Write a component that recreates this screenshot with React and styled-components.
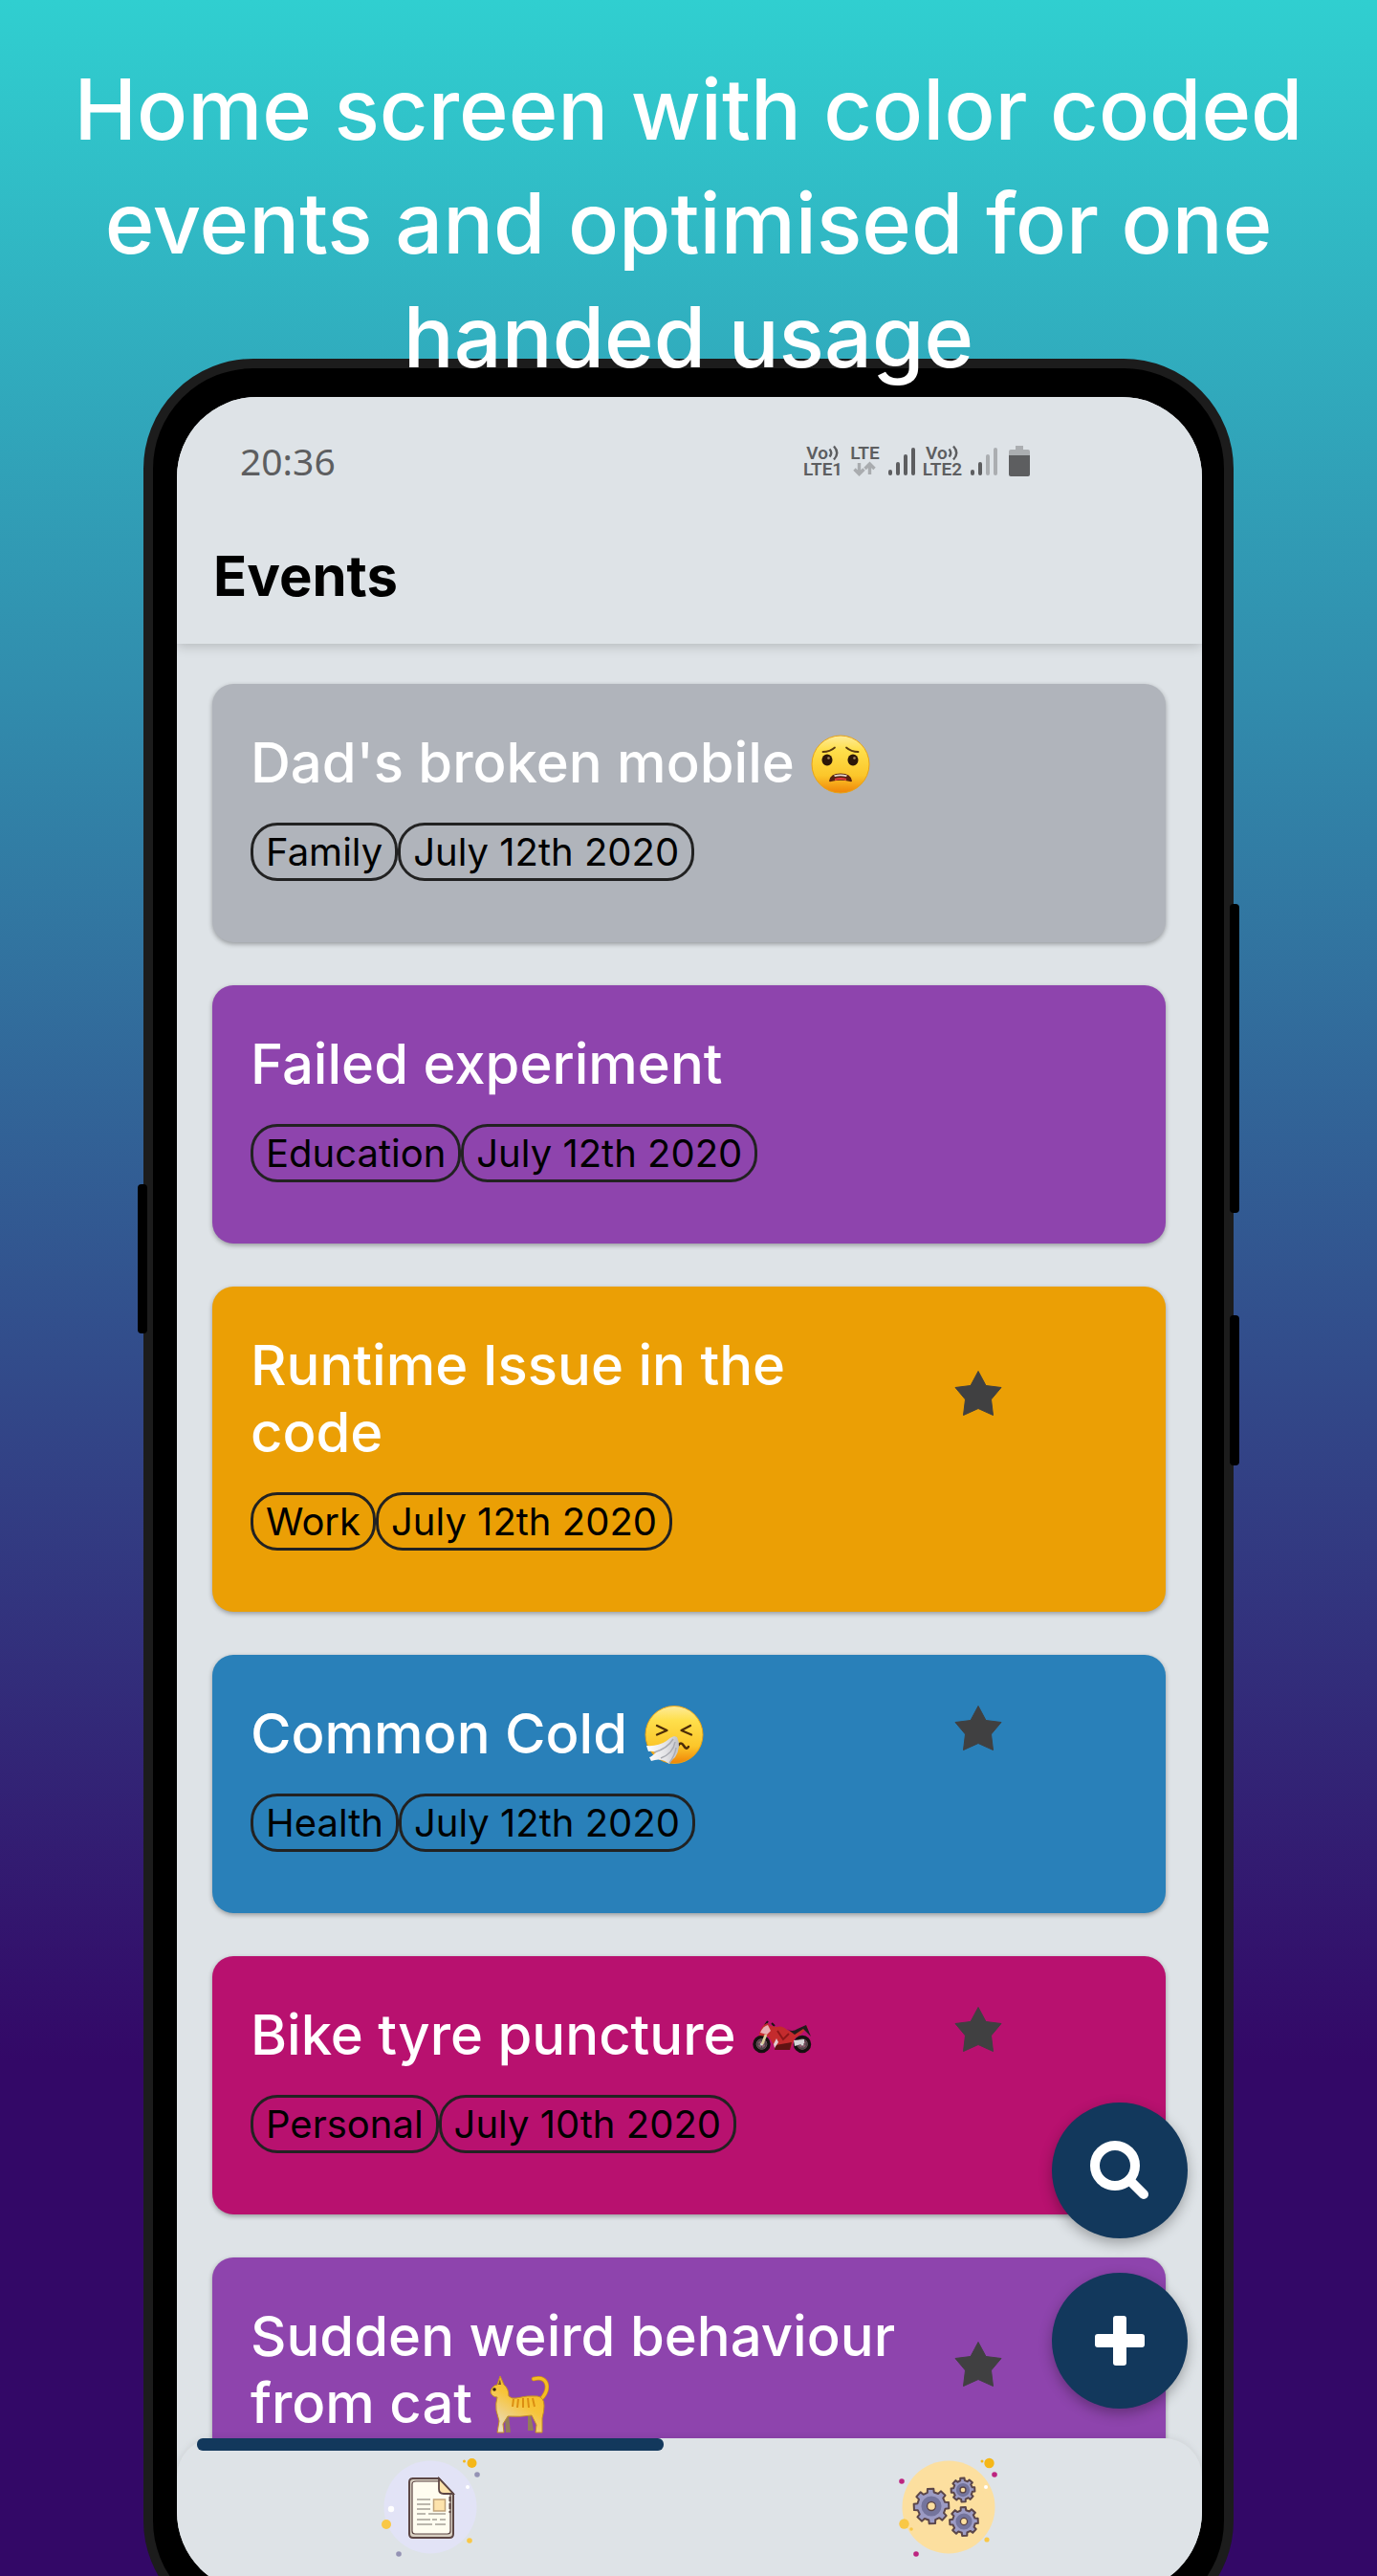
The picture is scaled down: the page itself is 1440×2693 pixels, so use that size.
import React from "react";
import styled, { createGlobalStyle } from "styled-components";

const GlobalStyle = createGlobalStyle`
  *, *::before, *::after { box-sizing: border-box; }
  body {
    margin: 0;
    font-family: Inter, "Liberation Sans", sans-serif;
  }
  h1, h2, h3, p, ul { margin: 0; padding: 0; }
  svg { display: block; flex: none; }
`;

const NAVY = "#12385c";
const SURFACE = "#dee3e7";

const Page = styled.div`
  height: 100vh;
  overflow: hidden;
  display: flex;
  flex-direction: column;
  background: linear-gradient(180deg, #30cfd0 0%, #330867 80%);
`;

const Headline = styled.h1`
  position: relative;
  z-index: 2;
  padding: 55px 40px 0;
  color: #fff;
  font-size: 88px;
  line-height: 119px;
  font-weight: 500;
  text-align: center;
`;

const Phone = styled.div`
  position: relative;
  flex: 1;
  min-height: 0;
  display: flex;
  margin: -37px 150px -57px;
  padding: 30px 23px 30px 25px;
  border: 10px solid #1c1c1c;
  border-radius: 115px;
  background: #000;
`;

const SideKey = styled.span`
  position: absolute;
  top: ${(p) => p.$top}px;
  ${(p) => p.$side}: -16px;
  width: 10px;
  height: ${(p) => p.$length}px;
  border-radius: 4px;
  background: #000;
`;

const Screen = styled.main`
  flex: 1;
  min-width: 0;
  display: flex;
  flex-direction: column;
  overflow: hidden;
  border-radius: 84px;
  background: ${SURFACE};
`;

const AppHeader = styled.header`
  position: relative;
  z-index: 1;
  background: ${SURFACE};
  box-shadow: 0 2px 12px rgba(0, 0, 0, 0.2);
`;

const StatusBar = styled.div`
  display: flex;
  justify-content: space-between;
  align-items: center;
  padding: 37px 180px 19px 66px;
  color: #5d5e60;
`;

const Clock = styled.time`
  font-family: "Noto Sans", sans-serif;
  font-size: 39px;
  line-height: 60px;
`;

const Indicators = styled.div`
  display: flex;
  align-items: center;
  gap: 8px;
`;

const Carrier = styled.div`
  display: flex;
  flex-direction: column;
  align-items: center;
  font-family: Roboto, sans-serif;
  font-size: 19px;
  line-height: 17px;
  font-weight: 600;
`;

const CarrierLine = styled.span`
  display: flex;
  align-items: center;
  height: 17px;
`;

const BatterySlot = styled.span`
  padding-left: 4px;
`;

const TitleBar = styled.div`
  display: flex;
  align-items: center;
  height: 142px;
  padding: 0 38px;
`;

const ScreenTitle = styled.h2`
  color: #000;
  font-size: 58px;
  line-height: 70px;
  font-weight: 700;
`;

const Body = styled.section`
  position: relative;
  flex: 1;
  min-height: 0;
  display: flex;
  flex-direction: column;
`;

const EventList = styled.ul`
  flex: 1;
  min-height: 0;
  overflow: hidden;
  display: flex;
  flex-direction: column;
  gap: 45px;
  padding: 42px 38px 0 37px;
  list-style: none;
`;

const Card = styled.li`
  flex: none;
  padding: 47px 40px 64px;
  border-radius: 22px;
  background: ${(p) => p.$color};
  box-shadow: 0 2px 5px rgba(0, 0, 0, 0.32);
`;

const CardTop = styled.div`
  display: grid;
  grid-template-columns: 3fr 1fr;
  align-items: center;
`;

const CardTitle = styled.h3`
  color: #fff;
  font-size: 58px;
  line-height: 70px;
  font-weight: 500;
`;

const InlineEmoji = styled.svg`
  display: inline-block;
  width: 62px;
  height: 62px;
  margin-left: 2px;
  vertical-align: -12px;
`;

const StarSlot = styled.span`
  padding: 0 0 10px 48px;
`;

const Tags = styled.div`
  display: flex;
  margin-top: 28px;
`;

const Tag = styled.span`
  padding: 0 13px;
  border: 3px solid #222;
  border-radius: 28px;
  color: #000;
  font-size: 40px;
  line-height: 55px;
`;

const Actions = styled.div`
  position: absolute;
  right: 15px;
  bottom: 31px;
  display: flex;
  flex-direction: column;
  gap: 36px;
`;

const RoundButton = styled.button`
  display: flex;
  align-items: center;
  justify-content: center;
  width: 142px;
  height: 142px;
  padding: 0;
  border: 0;
  border-radius: 50%;
  background: ${NAVY};
  box-shadow: 0 5px 14px rgba(0, 0, 0, 0.3);
`;

const TabBar = styled.nav`
  position: relative;
  display: grid;
  grid-template-columns: 1fr 1fr;
  gap: 54px;
  height: 161px;
  padding: 0 21px;
  border-radius: 40px 40px 0 0;
  background: ${SURFACE};
  box-shadow: 0 0 8px rgba(0, 0, 0, 0.09);
`;

const Tab = styled.button`
  display: flex;
  flex-direction: column;
  align-items: center;
  gap: 4px;
  padding: 0;
  border: 0;
  background: none;
`;

const TabMarker = styled.span`
  align-self: stretch;
  height: 13px;
  border-radius: 6px;
  background: ${(p) => (p.$active ? NAVY : "transparent")};
`;

/* ---------- status icons ---------- */

const Waves = () => (
  <svg width="12" height="17" viewBox="0 0 12 17" fill="none" stroke="#5d5e60" strokeWidth="2.4">
    <path d="M1.5 4.5Q5 8.5 1.5 12.5M6 1.5Q12.5 8.5 6 15.5" />
  </svg>
);

const Bars = ({ level }) => (
  <svg width="29" height="32" viewBox="0 0 29 32" strokeWidth="4" strokeLinecap="round">
    {[26, 18, 10, 3].map((y, i) => (
      <path key={y} d={`M${3 + i * 8} ${y + 1}V29`} stroke={i < level ? "#5d5e60" : "#abaeb1"} />
    ))}
  </svg>
);

const DataArrows = () => (
  <svg width="24" height="17" viewBox="0 0 24 17" fill="none" stroke="#a9acaf" strokeWidth="3.4">
    <path d="M6.500 2V14M1.500 8.500L6.500 13.500L11.500 8.500M17.500 14V3M12.500 8L17.500 3L22.500 8" />
  </svg>
);

const Battery = () => (
  <svg width="22" height="32" viewBox="0 0 22 32">
    <path d="M7 0H15V4H20Q22 4 22 6V11H0V6Q0 4 2 4H7Z" fill="#abaeb1" />
    <path d="M0 10H22V30Q22 32 20 32H2Q0 32 0 30Z" fill="#5d5e60" />
  </svg>
);

/* ---------- card icons ---------- */

const Star = () => (
  <svg width="50" height="50" viewBox="0 0 50 50" role="img" aria-label="Starred">
    <path
      d="M25 1.500L33 16.500L49 18.500L38.500 31L40.500 47.500L25 40.500L9.500 47.500L11.500 31L1 18.500L17 16.500Z"
      fill="#404041"
      stroke="#404041"
      strokeLinejoin="round"
    />
  </svg>
);

const FaceGradient = ({ id }) => (
  <defs>
    <linearGradient id={id} x1="0" y1="0" x2="0" y2="1">
      <stop offset="0" stopColor="#fdeb9a" />
      <stop offset="0.25" stopColor="#ffdf4b" />
      <stop offset="0.7" stopColor="#fbc62a" />
      <stop offset="1" stopColor="#f08407" />
    </linearGradient>
  </defs>
);

const WorriedFace = () => (
  <InlineEmoji viewBox="0 0 62 62" role="img" aria-label="worried face">
    <FaceGradient id="worried" />
    <circle cx="31" cy="31" r="30" fill="url(#worried)" stroke="#e8a317" />
    <path d="M12.500 18Q20 18 25 13.500M49.500 18Q42 18 37 13.500" fill="none" stroke="#5a3a10" strokeWidth="1.800" strokeLinecap="round" />
    <ellipse cx="17" cy="26.500" rx="5.500" ry="6" fill="#2c1608" />
    <ellipse cx="44" cy="26.500" rx="5.500" ry="6" fill="#2c1608" />
    <circle cx="18.500" cy="24.500" r="1.300" fill="#a98a60" />
    <circle cx="45.500" cy="24.500" r="1.300" fill="#a98a60" />
    <path d="M19 48.500Q20 40.500 31 40.500Q42 40.500 43 48.500Q42.500 49.500 41 49Q31 46.500 21 49Q19.500 49.500 19 48.500Z" fill="#57220f" />
    <path d="M24 42.500Q31 40.500 38 42.500L37 44Q31 42.500 25 44Z" fill="#e8dccf" />
    <path d="M25 47Q31 45 37 47" fill="none" stroke="#e23a3a" strokeWidth="2" />
  </InlineEmoji>
);

const SneezingFace = () => (
  <InlineEmoji viewBox="0 0 62 62" role="img" aria-label="sneezing face">
    <FaceGradient id="sneezing" />
    <linearGradient id="tissue" x1="0" y1="0" x2="1" y2="0">
      <stop offset="0" stopColor="#ffffff" />
      <stop offset="0.6" stopColor="#e3e3e6" />
      <stop offset="1" stopColor="#bfc0c6" />
    </linearGradient>
    <circle cx="31" cy="30.500" r="30" fill="url(#sneezing)" stroke="#e8a317" />
    <path d="M13 21L23.500 26L13 30.500M48 21L38.500 26L49 30.500" fill="none" stroke="#4d2c08" strokeWidth="2.300" strokeLinecap="round" strokeLinejoin="round" />
    <path d="M35 42Q38 37 41 42T46 43" fill="none" stroke="#4d2c08" strokeWidth="2.500" strokeLinecap="round" />
    <path d="M31 32Q27 33 23 37Q14 43 2 42L4 48Q8 47 12 49Q7 54 5 54L7 58Q15 55 21 58L26 61Q28 57 32 54Q39 43 34 33Z" fill="url(#tissue)" />
    <path d="M30 35Q24 45 10 49M32 38Q30 50 17 55M33 44Q32 52 26 60" fill="none" stroke="#a9abb2" strokeWidth="1.500" />
  </InlineEmoji>
);

const Wheel = ({ x }) => (
  <g>
    <circle cx={x} cy="39" r="7.500" fill="#8d5a6c" stroke="#15110f" strokeWidth="3.500" />
    <circle cx={x} cy="39" r="4.500" fill="none" stroke="#4c4448" strokeWidth="1.500" />
    <path d={`M${x - 6} 39H${x + 6}M${x} 33V45`} stroke="#4c4448" />
    <circle cx={x} cy="39" r="1.500" fill="#ddd" />
  </g>
);

const Motorcycle = () => (
  <InlineEmoji viewBox="0 0 62 62" role="img" aria-label="motorcycle">
    <Wheel x={9.5} />
    <Wheel x={52} />
    <path d="M13 19L16 15M20 17L23 20" stroke="#1b1513" strokeWidth="2" />
    <path d="M7 28Q9 20 15 17L19 20L25 21Q31 19 36 24L42 27L56 20L58 21L51 28L44 33L40 43H24L21 38L17 31L7 30Z" fill="#c42b2d" />
    <path d="M8 27Q11 20 16 19L19 25L15 29Z" fill="#eaaeb4" />
    <path d="M36 23Q41 27 47 23L56 19L61 31L53 23L44 29Z" fill="#231b1c" />
    <path d="M24 40L41 37L39 45H23Z" fill="#611313" />
    <path d="M14 29L10 39" stroke="#dccf9c" strokeWidth="2.800" />
    <path d="M43 35L54 34V38L44 41Z" fill="#d6d5d7" />
    <path d="M22 39L25 33L27 37L23 43Z" fill="#e3cdd1" />
    <path d="M26 25L32 34L38 28" fill="none" stroke="#8c1719" strokeWidth="2" />
  </InlineEmoji>
);

const Cat = () => (
  <InlineEmoji viewBox="0 0 62 62" role="img" aria-label="cat">
    <defs>
      <linearGradient id="fur" x1="0.900" y1="0" x2="0.300" y2="1">
        <stop offset="0" stopColor="#f6b91a" />
        <stop offset="0.5" stopColor="#f7c43a" />
        <stop offset="1" stopColor="#e9dcc0" />
      </linearGradient>
    </defs>
    <path d="M46 4Q59 1 60 12Q60 19 53 26" fill="none" stroke="#cf9016" strokeWidth="4.500" strokeLinecap="round" />
    <path d="M46 4Q59 1 60 12Q60 19 53 26" fill="none" stroke="#f6bd24" strokeWidth="3" strokeLinecap="round" />
    <path d="M20 42L22 60H17L16 44ZM43 41L46 58H40V42Z" fill="#937c59" />
    <path
      d="M8 10L11 1L15 10Q20 14 20 22Q23 25 28 24Q40 21 50 22Q57 23 57 32Q57 38 55 45L55 60H48L49 52L44 42Q32 44 19 43L14 51L15 60H8L10 48L7 37Q6 30 8 23Q3 23 1 18Q2 11 8 10Z"
      fill="url(#fur)"
      stroke="#c58e25"
    />
    <path d="M25 25L24 33M30 25L29 34M35 24V34M40 24L41 34M45 24L47 33" stroke="#dc8e12" strokeWidth="2" />
    <circle cx="5" cy="15" r="1.800" fill="#35240d" />
    <path d="M9 10L11 4L12 10Z" fill="#74502a" />
  </InlineEmoji>
);

/* ---------- action icons ---------- */

const SearchIcon = () => (
  <svg width="62" height="62" viewBox="0 0 62 62" fill="none" stroke="#fff">
    <circle cx="26" cy="26" r="21" strokeWidth="10" />
    <path d="M41 41L56 56" strokeWidth="10" strokeLinecap="round" />
  </svg>
);

const PlusIcon = () => (
  <svg width="52" height="52" viewBox="0 0 52 52" fill="#fff">
    <rect x="19" width="14" height="52" rx="3" />
    <rect y="19" width="52" height="14" rx="3" />
  </svg>
);

/* ---------- tab icons ---------- */

const Dots = ({ items }) =>
  items.map(([x, y, r, color]) => <circle key={`${x}-${y}`} cx={x} cy={y} r={r} fill={color} />);

const DocumentIcon = () => (
  <svg width="110" height="110" viewBox="0 0 110 110">
    <circle cx="55" cy="55" r="48.500" fill="#e2e3f6" />
    <Dots
      items={[
        [98.5, 9, 5, "#f5b718"],
        [90.5, 7, 1.5, "#f5b718"],
        [104, 21, 2.8, "#9492b4"],
        [94, 34, 2, "#fff"],
        [14, 57, 3.2, "#fff"],
        [9, 73, 5, "#f9c846"],
        [96, 90, 2.8, "#f9c846"],
        [22, 104, 2.8, "#9492b4"],
      ]}
    />
    <path d="M36 25H64L79 41V83Q79 87 75 87H37Q33 87 33 83V29Q33 25 37 25Z" fill="#d8d0c2" stroke="#5c4644" strokeWidth="2" />
    <path d="M40 28H64L76 41V80Q76 83 73 83H39Q36 83 36 80V31Q36 28 40 28Z" fill="#fffdf0" stroke="#5c4644" strokeWidth="1.200" />
    <path d="M64 25V36Q64 41 69 41H79Z" fill="#fde3ac" stroke="#5c4644" strokeWidth="1.800" />
    <path d="M41 47H55M41 52H55M41 57H55M41 62H50M53 62H71M41 68H55M57 68H62M65 68H71M41 73H57M60 73H71" stroke="#a5a096" strokeWidth="1.500" />
    <rect x="58.500" y="47" width="12" height="12" fill="#fde3ac" stroke="#c0a37a" strokeWidth="1.500" />
    <path d="M75.500 44V49M75.500 51V57M75.500 59V61" stroke="#5c4644" strokeWidth="2" />
  </svg>
);

const gearOutline = (cx, cy, r) => {
  const teeth = 8;
  const points = [];
  for (let i = 0; i < teeth; i += 1) {
    [
      [-0.3, 0.8],
      [-0.22, 1],
      [0.22, 1],
      [0.3, 0.8],
    ].forEach(([offset, k]) => {
      const a = ((i + offset) / teeth) * Math.PI * 2 - Math.PI / 2 - 0.05;
      points.push(`${(cx + Math.cos(a) * r * k).toFixed(2)},${(cy + Math.sin(a) * r * k).toFixed(2)}`);
    });
  }
  return points.join(" ");
};

const Gear = ({ cx, cy, r }) => (
  <g>
    <polygon points={gearOutline(cx, cy, r)} fill="#9c9bc4" stroke="#5b4649" strokeWidth="2" strokeLinejoin="round" />
    <circle cx={cx} cy={cy} r={r * 0.42} fill="none" stroke="#74749c" strokeWidth={r * 0.3} />
    <circle cx={cx} cy={cy} r={r * 0.24} fill="#fcdf9f" stroke="#5b4649" strokeWidth="1.400" />
  </g>
);

const GearsIcon = () => (
  <svg width="110" height="110" viewBox="0 0 110 110">
    <circle cx="55" cy="55" r="48.500" fill="#fcdf9f" />
    <Dots
      items={[
        [97.5, 9, 5.2, "#f5b718"],
        [90, 7, 1.5, "#f5b718"],
        [103, 21, 2.8, "#bd2480"],
        [6, 28, 2.8, "#bd2480"],
        [94, 34, 2, "#fff"],
        [8.5, 72.5, 5.2, "#f9c846"],
        [16, 78, 1.8, "#f9c846"],
        [95, 89, 2.6, "#f9c846"],
        [21, 104, 2.8, "#bd2480"],
      ]}
    />
    <Gear cx={37} cy={54} r={18.5} />
    <Gear cx={70} cy={37} r={12.5} />
    <Gear cx={71} cy={70} r={15} />
  </svg>
);

/* ---------- data ---------- */

const EVENTS = [
  { title: "Dad's broken mobile", Emoji: WorriedFace, tags: ["Family", "July 12th 2020"], color: "#b0b4bb" },
  { title: "Failed experiment", tags: ["Education", "July 12th 2020"], color: "#8e44ad" },
  { title: "Runtime Issue in the code", tags: ["Work", "July 12th 2020"], color: "#eb9f05", starred: true },
  { title: "Common Cold", Emoji: SneezingFace, tags: ["Health", "July 12th 2020"], color: "#2980b9", starred: true },
  { title: "Bike tyre puncture", Emoji: Motorcycle, tags: ["Personal", "July 10th 2020"], color: "#b8116f", starred: true },
  { title: "Sudden weird behaviour from cat", Emoji: Cat, tags: [], color: "#8e44ad", starred: true },
];

const EventCard = ({ title, Emoji, tags, color, starred }) => (
  <Card $color={color}>
    <CardTop>
      <CardTitle>
        {title}
        {Emoji && <> <Emoji /></>}
      </CardTitle>
      {starred && (
        <StarSlot>
          <Star />
        </StarSlot>
      )}
    </CardTop>
    {tags.length > 0 && (
      <Tags>
        {tags.map((tag) => (
          <Tag key={tag}>{tag}</Tag>
        ))}
      </Tags>
    )}
  </Card>
);

export default function App() {
  return (
    <Page>
      <GlobalStyle />
      <Headline>Home screen with color coded events and optimised for one handed usage</Headline>
      <Phone>
        <SideKey $side="left" $top={853} $length={156} />
        <SideKey $side="right" $top={560} $length={323} />
        <SideKey $side="right" $top={990} $length={157} />
        <Screen>
          <AppHeader>
            <StatusBar>
              <Clock>20:36</Clock>
              <Indicators>
                <Carrier>
                  <CarrierLine>Vo<Waves /></CarrierLine>
                  <CarrierLine>LTE1</CarrierLine>
                </Carrier>
                <Carrier>
                  <CarrierLine>LTE</CarrierLine>
                  <DataArrows />
                </Carrier>
                <Bars level={4} />
                <Carrier>
                  <CarrierLine>Vo<Waves /></CarrierLine>
                  <CarrierLine>LTE2</CarrierLine>
                </Carrier>
                <Bars level={2} />
                <BatterySlot>
                  <Battery />
                </BatterySlot>
              </Indicators>
            </StatusBar>
            <TitleBar>
              <ScreenTitle>Events</ScreenTitle>
            </TitleBar>
          </AppHeader>
          <Body>
            <EventList>
              {EVENTS.map((event) => (
                <EventCard key={event.title} {...event} />
              ))}
            </EventList>
            <Actions>
              <RoundButton type="button" aria-label="Search events">
                <SearchIcon />
              </RoundButton>
              <RoundButton type="button" aria-label="Add event">
                <PlusIcon />
              </RoundButton>
            </Actions>
          </Body>
          <TabBar>
            <Tab type="button" aria-label="Events">
              <TabMarker $active />
              <DocumentIcon />
            </Tab>
            <Tab type="button" aria-label="Settings">
              <TabMarker />
              <GearsIcon />
            </Tab>
          </TabBar>
        </Screen>
      </Phone>
    </Page>
  );
}
